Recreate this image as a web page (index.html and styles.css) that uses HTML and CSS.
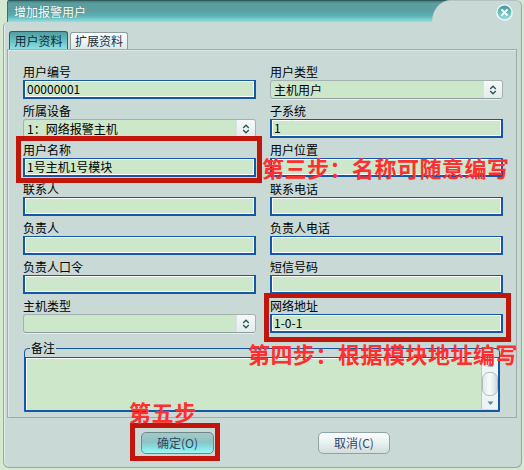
FILE: index.html
```html
<!DOCTYPE html>
<html>
<head>
<meta charset="utf-8">
<title>增加报警用户</title>
<link rel="stylesheet" href="styles.css">
</head>
<body>
<div class="window">
  <div class="titlebar">
    <div class="title-tab"><span class="title-text">增加报警用户</span></div>
    <div class="title-rest">
      <span class="close-btn">
        <svg width="17" height="17" viewBox="0 0 17 17">
          <defs>
            <linearGradient id="cg" x1="0" y1="0" x2="0" y2="1">
              <stop offset="0" stop-color="#3f9597"/>
              <stop offset="1" stop-color="#9fe3e3"/>
            </linearGradient>
          </defs>
          <circle cx="8.5" cy="8.5" r="7.6" fill="url(#cg)" stroke="#f4fafa" stroke-width="1.4"/>
          <path d="M6 6 L11 11 M11 6 L6 11" stroke="#ffffff" stroke-width="1.8" stroke-linecap="round"/>
        </svg>
      </span>
    </div>
  </div>
  <div class="body">
    <div class="tabs">
      <div class="tab active">用户资料</div>
      <div class="tab">扩展资料</div>
    </div>
    <div class="panel">
      <div class="grid">
        <div class="field"><div class="label">用户编号</div><div class="input">00000001</div></div>
        <div class="field"><div class="label">用户类型</div><div class="select"><span class="sel-text">主机用户</span><span class="sel-btn"><svg width="8" height="10" viewBox="0 0 8 10"><path d="M1.2 4 L4 1.3 L6.8 4 M1.2 6 L4 8.7 L6.8 6" fill="none" stroke="#2d5757" stroke-width="1.4"/></svg></span></div></div>
        <div class="field"><div class="label">所属设备</div><div class="select"><span class="sel-text">1：网络报警主机</span><span class="sel-btn"><svg width="8" height="10" viewBox="0 0 8 10"><path d="M1.2 4 L4 1.3 L6.8 4 M1.2 6 L4 8.7 L6.8 6" fill="none" stroke="#2d5757" stroke-width="1.4"/></svg></span></div></div>
        <div class="field"><div class="label">子系统</div><div class="input">1</div></div>
        <div class="field"><div class="label">用户名称</div><div class="input">1号主机1号模块</div></div>
        <div class="field"><div class="label">用户位置</div><div class="input"></div></div>
        <div class="field"><div class="label">联系人</div><div class="input"></div></div>
        <div class="field"><div class="label">联系电话</div><div class="input"></div></div>
        <div class="field"><div class="label">负责人</div><div class="input"></div></div>
        <div class="field"><div class="label">负责人电话</div><div class="input"></div></div>
        <div class="field"><div class="label">负责人口令</div><div class="input"></div></div>
        <div class="field"><div class="label">短信号码</div><div class="input"></div></div>
        <div class="field"><div class="label">主机类型</div><div class="select"><span class="sel-text"></span><span class="sel-btn"><svg width="8" height="10" viewBox="0 0 8 10"><path d="M1.2 4 L4 1.3 L6.8 4 M1.2 6 L4 8.7 L6.8 6" fill="none" stroke="#2d5757" stroke-width="1.4"/></svg></span></div></div>
        <div class="field"><div class="label">网络地址</div><div class="input">1-0-1</div></div>
      </div>
      <fieldset class="memo">
        <legend>备注</legend>
        <div class="memo-area">
          <div class="memo-text"></div>
          <div class="scrollbar">
            <div class="sb-up"><svg width="7" height="5" viewBox="0 0 7 5"><path d="M0.5 4.5 L3.5 1 L6.5 4.5 Z" fill="#5a8a8a"/></svg></div>
            <div class="sb-thumb"></div>
            <div class="sb-down"><svg width="7" height="5" viewBox="0 0 7 5"><path d="M0.5 0.5 L3.5 4 L6.5 0.5 Z" fill="#5a8a8a"/></svg></div>
          </div>
        </div>
      </fieldset>
    </div>
    <div class="buttons">
      <div class="btn primary">确定(O)</div>
      <div class="btn">取消(C)</div>
    </div>
  </div>
</div>

<div class="mark box-name"></div>
<div class="mark box-addr"></div>
<div class="mark box-ok"></div>
<div class="note note-3">第三步：名称可随意编写</div>
<div class="note note-4">第四步：根据模块地址编写</div>
<div class="note note-5">第五步</div>
</body>
</html>
```

FILE: styles.css
```css
* { box-sizing: border-box; }
html, body { margin: 0; padding: 0; }
body {
  width: 524px;
  height: 470px;
  overflow: hidden;
  position: relative;
  background: #d5e9d1;
  font-family: "Noto Sans CJK SC", "Liberation Sans", sans-serif;
  font-size: 12px;
  color: #000;
}

.window {
  margin-left: 3px;
  width: 519px;
  height: 468px;
  display: flex;
  flex-direction: column;
}

/* title bar */
.titlebar {
  display: flex;
  height: 22px;
  flex: none;
}
.title-tab {
  flex: 1;
  margin-left: 4px;
  margin-right: -24px;
  background: linear-gradient(#467f81 0%, #5b9ea0 12%, #5a9fa1 45%, #5cb0b2 70%, #8fe2e4 100%);
  border-top: 1px solid #2e5c5d;
  border-left: 1px solid #3c6e70;
  border-top-left-radius: 2px;
  padding: 2px 0 0 6px;
  color: #fff;
  line-height: 18px;
  font-size: 12px;
}
.title-text { text-shadow: 0 0 1px rgba(40, 80, 80, 0.6); }
.title-rest {
  width: 90px;
  position: relative;
  z-index: 1;
  background: #c9d9d6;
  border-top-left-radius: 18px 22px;
  border-top-right-radius: 6px;
  border-top: 1px solid #b4c4c2;
  border-right: 1px solid #98a8a8;
  display: flex;
  justify-content: flex-end;
  align-items: center;
  padding: 2px 8px 0 0;
}
.close-btn { display: flex; }

/* body */
.body {
  flex: 1;
  position: relative;
  background: #c9d9d6;
  border: 1px solid #98a8a8;
  border-top: none;
  border-radius: 5px 0 6px 6px;
  padding: 9px 4px 0 3px;
  box-shadow: inset 1px 0 0 #e2ecea;
}

.tabs {
  display: flex;
  align-items: flex-end;
  gap: 2px;
  height: 18px;
  margin-left: 2px;
}
.tab {
  height: 17px;
  width: 58px;
  border: 1px solid #8a9c9c;
  border-bottom: none;
  border-radius: 3px 3px 0 0;
  background: linear-gradient(#ffffff, #dbe8e8);
  color: #1d3040;
  text-align: center;
  line-height: 16px;
  font-size: 12px;
}
.tab.active {
  height: 18px;
  width: 59px;
  border-color: #3b5a5a;
  background: linear-gradient(#4e9fa1, #6cc6c8 60%, #8ee0e0);
  color: #10283c;
  line-height: 18px;
}

.panel {
  height: 369px;
  border: 1px solid #a0acaa;
  box-shadow: inset 1px 1px 0 #dde8e6;
  padding: 10px 13px 0 15px;
}

.grid {
  display: grid;
  grid-template-columns: 233px 233px;
  column-gap: 14px;
}
.field { height: 39px; }
.label {
  height: 20px;
  padding-top: 4px;
  line-height: 16px;
  white-space: nowrap;
}
.input {
  height: 19px;
  border: 2px solid #1656a6;
  border-top-width: 1px;
  background: #cde7cb;
  box-shadow: inset 1px 1px 0 #ffffff, inset -1px -1px 0 #ffffff;
  padding-left: 2px;
  line-height: 16px;
  white-space: nowrap;
}
.select {
  height: 19px;
  display: flex;
  border: 1px solid #a3b1b0;
  border-bottom-color: #8e9c9c;
  border-radius: 3px;
  background: #cde7cb;
  box-shadow: 0 1px 0 #e6eeec;
  overflow: hidden;
}
.sel-text {
  flex: 1;
  padding-left: 3px;
  line-height: 17px;
  white-space: nowrap;
}
.sel-btn {
  width: 19px;
  display: flex;
  align-items: center;
  justify-content: center;
  background: linear-gradient(#f6f9f9, #e4ecec);
  border-left: 1px solid #d7e2e1;
}

/* memo */
.memo {
  margin: 8px 3px 0 1px;
  padding: 2px 0 0 0;
  border: 1px solid #1656a6;
  border-radius: 4px 4px 0 0;
  min-width: 0;
}
.memo legend {
  margin-left: 5px;
  padding: 0 1px;
  line-height: 14px;
  font-size: 12px;
}
.memo-area {
  height: 54px;
  display: flex;
  border: 1px solid #1656a6;
  background: #cde7cb;
  box-shadow: inset 1px 1px 0 #ffffff;
}
.memo-text { flex: 1; }
.scrollbar {
  width: 17px;
  margin: 1px 0 1px 0;
  display: flex;
  flex-direction: column;
  background: #eef3f3;
  border-left: 1px solid #b8c8c6;
}
.sb-up, .sb-down {
  height: 11px;
  display: flex;
  align-items: center;
  justify-content: center;
}
.sb-thumb {
  flex: 1;
  margin: 2px 0;
  border: 1px solid #aebebe;
  border-radius: 7px;
  background: linear-gradient(90deg, #e2eaea, #f8fbfb 50%, #d0dcdc);
}

/* buttons */
.buttons {
  display: flex;
  gap: 104px;
  margin: 14px 0 0 134px;
}
.btn {
  width: 72px;
  height: 22px;
  border: 1px solid #8fa3a3;
  border-radius: 5px;
  background: linear-gradient(#fbfdfd, #e8f0f0 50%, #cfdedd);
  color: #2f4468;
  text-align: center;
  line-height: 20px;
  font-size: 12px;
}
.btn.primary {
  width: 73px;
  border-color: #6a8a8a;
  background: linear-gradient(#a8c8c8, #8cc4c4 45%, #80e6e6 75%, #a8f4f4);
}

/* annotations */
.mark {
  position: absolute;
  border: 5px solid #c0160c;
}
.box-name { left: 16px; top: 136px; width: 246px; height: 47px; }
.box-addr { left: 264px; top: 293px; width: 247px; height: 49px; }
.box-ok { left: 130px; top: 423px; width: 90px; height: 38px; }

.note {
  position: absolute;
  color: #ff2f2f;
  font-weight: bold;
  font-size: 22px;
  line-height: 22px;
  letter-spacing: 0.5px;
  white-space: nowrap;
}
.note-3 { left: 262px; top: 156px; }
.note-4 { left: 248px; top: 342px; }
.note-5 { left: 129px; top: 400px; }
```
